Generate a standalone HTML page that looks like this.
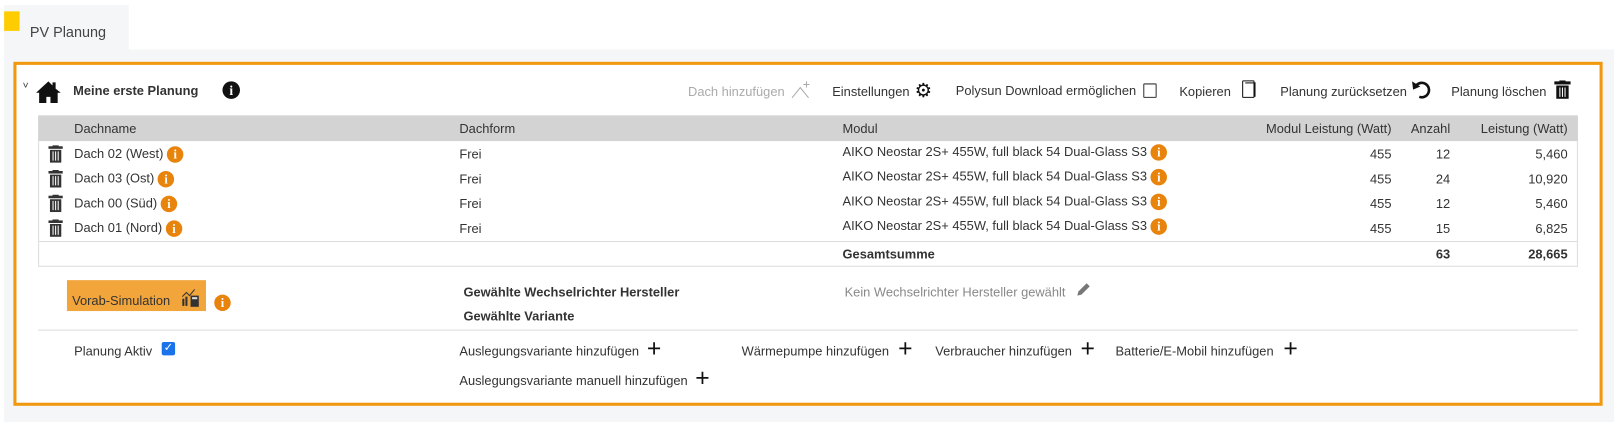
<!DOCTYPE html>
<html><head><meta charset="utf-8"><style>
body{margin:0;width:1615px;height:422px;background:#fff;font-family:"Liberation Sans",sans-serif;font-size:12.5px;color:#333;position:relative;overflow:hidden}
#w{position:absolute;left:0;top:0;width:1568px;height:410px;transform:scale(1.02997);transform-origin:0 0}
.a{position:absolute;white-space:nowrap}
.oi{display:inline-block;width:16px;height:16px;border-radius:50%;background:#e8830c;color:#fff;font-weight:bold;font-size:12px;text-align:center;line-height:16px;font-family:"Liberation Serif",serif;vertical-align:middle}
.r{text-align:right}
.b{font-weight:bold}
.c1{right:217px}.c2{right:160px}.c3{right:46px}
</style></head><body><div id="w">
<div class="a" style="left:4px;top:5px;width:121px;height:43px;background:#f5f6f7"></div>
<div class="a" style="left:4px;top:11px;width:15px;height:19px;background:#ffcc00"></div>
<div class="a" style="left:29px;top:23px;font-size:14px;color:#444">PV Planung</div>
<div class="a" style="left:4px;top:48px;width:1563px;height:362px;background:#f5f6f7"></div>
<div class="a" style="left:13px;top:60px;width:1537px;height:328px;border:3px solid #f0980f;background:#fff"></div>

<div class="a" style="left:22px;top:78px;font-size:10px">˅</div>
<svg class="a" style="left:35px;top:78px" width="24" height="22" viewBox="0 0 24 22"><path d="M12 1L0 12h3v10h7v-6h4v6h7V12h3L19 8V2h-3v3z" fill="#111"/></svg>
<div class="a b" style="left:71px;top:81px;font-size:12.5px">Meine erste Planung</div>
<div class="a" style="left:216px;top:79px;width:17px;height:17px;border-radius:50%;background:#111;color:#fff;font-weight:bold;font-family:'Liberation Serif',serif;text-align:center;line-height:17px;font-size:13px">i</div>

<div class="a" style="left:668px;top:82px;color:#aaa">Dach hinzufügen</div>
<svg class="a" style="left:768px;top:78px" width="20" height="18"><path d="M1 17L9 7l8 10M15 1v6M12 4h6" stroke="#aaa" fill="none"/></svg>
<div class="a" style="left:808px;top:82px">Einstellungen</div>
<div class="a" style="left:888px;top:77px;font-size:19px;color:#111">⚙</div>
<div class="a" style="left:928px;top:81px">Polysun Download ermöglichen</div>
<div class="a" style="left:1110px;top:81px;width:11px;height:12px;border:1px solid #333;border-radius:1px"></div>
<div class="a" style="left:1145px;top:82px">Kopieren</div>
<div class="a" style="left:1206px;top:78px;width:10px;height:15px;border:1.5px solid #111;border-radius:1px"></div>
<div class="a" style="left:1209px;top:80px;width:9px;height:13px;border-right:1.5px solid #111;border-top:1.5px solid #111"></div>
<div class="a" style="left:1243px;top:82px">Planung zurücksetzen</div>
<svg class="a" style="left:1370px;top:77px" width="20" height="20"><path d="M5 6a7 7 0 1 1 3 11" stroke="#111" stroke-width="2.5" fill="none"/><path d="M1 2l1 8 7-3z" fill="#111"/></svg>
<div class="a" style="left:1409px;top:82px">Planung löschen</div>
<svg class="a" style="left:1509px;top:78px" width="16" height="18"><rect x="0" y="1" width="16" height="3" fill="#111"/><rect x="5" y="0" width="6" height="2" fill="#111"/><path d="M2 5h12v13H2z" fill="#111"/><path d="M5.5 7v9M8 7v9M10.5 7v9" stroke="#fff" stroke-width="1"/></svg>

<div class="a" style="left:37px;top:112px;width:1495px;height:25px;background:#d3d3d3"></div>
<div class="a" style="left:37px;top:137px;width:1493px;height:121px;border:1px solid #ddd;border-top:none"></div>
<div class="a" style="left:38px;top:234px;width:1493px;height:1px;background:#ddd"></div>
<div class="a" style="left:72px;top:118px">Dachname</div>
<div class="a" style="left:446px;top:118px">Dachform</div>
<div class="a" style="left:818px;top:118px">Modul</div>
<div class="a r c1" style="top:118px">Modul Leistung (Watt)</div>
<div class="a r c2" style="top:118px">Anzahl</div>
<div class="a r c3" style="top:118px">Leistung (Watt)</div>

<div style="position:absolute;left:0;top:140px;width:1568px">
<div style="position:relative;height:24px"><svg class="a" style="left:47px;top:1px" width="14" height="17"><rect x="0" y="1" width="14" height="2.5" fill="#333"/><rect x="4" y="0" width="6" height="2" fill="#333"/><path d="M1.5 4.5h11V17h-11z" fill="#333"/><path d="M4.5 6v9M7 6v9M9.5 6v9" stroke="#fff"/></svg><div class="a" style="left:72px;top:2px">Dach 02 (West) <span class="oi">i</span></div><div class="a" style="left:446px;top:3px">Frei</div><div class="a" style="left:818px;top:0">AIKO Neostar 2S+ 455W, full black 54 Dual-Glass S3 <span class="oi">i</span></div><div class="a r c1" style="top:3px">455</div><div class="a r c2" style="top:3px">12</div><div class="a r c3" style="top:3px">5,460</div></div>
<div style="position:relative;height:24px"><svg class="a" style="left:47px;top:1px" width="14" height="17"><rect x="0" y="1" width="14" height="2.5" fill="#333"/><rect x="4" y="0" width="6" height="2" fill="#333"/><path d="M1.5 4.5h11V17h-11z" fill="#333"/><path d="M4.5 6v9M7 6v9M9.5 6v9" stroke="#fff"/></svg><div class="a" style="left:72px;top:2px">Dach 03 (Ost) <span class="oi">i</span></div><div class="a" style="left:446px;top:3px">Frei</div><div class="a" style="left:818px;top:0">AIKO Neostar 2S+ 455W, full black 54 Dual-Glass S3 <span class="oi">i</span></div><div class="a r c1" style="top:3px">455</div><div class="a r c2" style="top:3px">24</div><div class="a r c3" style="top:3px">10,920</div></div>
<div style="position:relative;height:24px"><svg class="a" style="left:47px;top:1px" width="14" height="17"><rect x="0" y="1" width="14" height="2.5" fill="#333"/><rect x="4" y="0" width="6" height="2" fill="#333"/><path d="M1.5 4.5h11V17h-11z" fill="#333"/><path d="M4.5 6v9M7 6v9M9.5 6v9" stroke="#fff"/></svg><div class="a" style="left:72px;top:2px">Dach 00 (Süd) <span class="oi">i</span></div><div class="a" style="left:446px;top:3px">Frei</div><div class="a" style="left:818px;top:0">AIKO Neostar 2S+ 455W, full black 54 Dual-Glass S3 <span class="oi">i</span></div><div class="a r c1" style="top:3px">455</div><div class="a r c2" style="top:3px">12</div><div class="a r c3" style="top:3px">5,460</div></div>
<div style="position:relative;height:24px"><svg class="a" style="left:47px;top:1px" width="14" height="17"><rect x="0" y="1" width="14" height="2.5" fill="#333"/><rect x="4" y="0" width="6" height="2" fill="#333"/><path d="M1.5 4.5h11V17h-11z" fill="#333"/><path d="M4.5 6v9M7 6v9M9.5 6v9" stroke="#fff"/></svg><div class="a" style="left:72px;top:2px">Dach 01 (Nord) <span class="oi">i</span></div><div class="a" style="left:446px;top:3px">Frei</div><div class="a" style="left:818px;top:0">AIKO Neostar 2S+ 455W, full black 54 Dual-Glass S3 <span class="oi">i</span></div><div class="a r c1" style="top:3px">455</div><div class="a r c2" style="top:3px">15</div><div class="a r c3" style="top:3px">6,825</div></div>
</div>
<div class="a b" style="left:818px;top:240px">Gesamtsumme</div>
<div class="a b r c2" style="top:240px">63</div>
<div class="a b r c3" style="top:240px">28,665</div>

<div class="a" style="left:65px;top:272px;width:135px;height:30px;background:#f2a53a"></div>
<div class="a" style="left:70px;top:285px;color:#333">Vorab-Simulation</div>
<svg class="a" style="left:176px;top:280px" width="18" height="18"><path d="M1 8l4-4 3 3 5-6" stroke="#333" fill="none"/><rect x="1" y="10" width="2" height="7" fill="#333"/><rect x="4" y="8" width="2" height="9" fill="#333"/><rect x="9" y="7" width="8" height="11" fill="#333"/><rect x="10.5" y="8.5" width="5" height="2" fill="#ddd"/></svg>
<div class="a" style="left:208px;top:286px"><span class="oi">i</span></div>
<div class="a b" style="left:450px;top:277px">Gewählte Wechselrichter Hersteller</div>
<div class="a b" style="left:450px;top:300px">Gewählte Variante</div>
<div class="a" style="left:820px;top:277px;color:#888">Kein Wechselrichter Hersteller gewählt</div>
<svg class="a" style="left:1044px;top:273px" width="16" height="16"><path d="M2 14l1-4 8-8 3 3-8 8z" fill="#777"/></svg>

<div class="a" style="left:37px;top:320px;width:1495px;height:1px;background:#ddd"></div>
<div class="a" style="left:72px;top:334px">Planung Aktiv</div>
<div class="a" style="left:157px;top:332px;width:13px;height:13px;background:#1a73e8;border-radius:2px;color:#fff;font-size:11px;text-align:center;line-height:13px">✓</div>
<div class="a" style="left:446px;top:334px">Auslegungsvariante hinzufügen</div>
<div class="a" style="left:628px;top:327px;font-size:24px;color:#111;line-height:24px">+</div>
<div class="a" style="left:720px;top:334px">Wärmepumpe hinzufügen</div>
<div class="a" style="left:872px;top:327px;font-size:24px;color:#111;line-height:24px">+</div>
<div class="a" style="left:908px;top:334px">Verbraucher hinzufügen</div>
<div class="a" style="left:1049px;top:327px;font-size:24px;color:#111;line-height:24px">+</div>
<div class="a" style="left:1083px;top:334px">Batterie/E-Mobil hinzufügen</div>
<div class="a" style="left:1246px;top:327px;font-size:24px;color:#111;line-height:24px">+</div>
<div class="a" style="left:446px;top:363px">Auslegungsvariante manuell hinzufügen</div>
<div class="a" style="left:675px;top:356px;font-size:24px;color:#111;line-height:24px">+</div>
</div></body></html>
